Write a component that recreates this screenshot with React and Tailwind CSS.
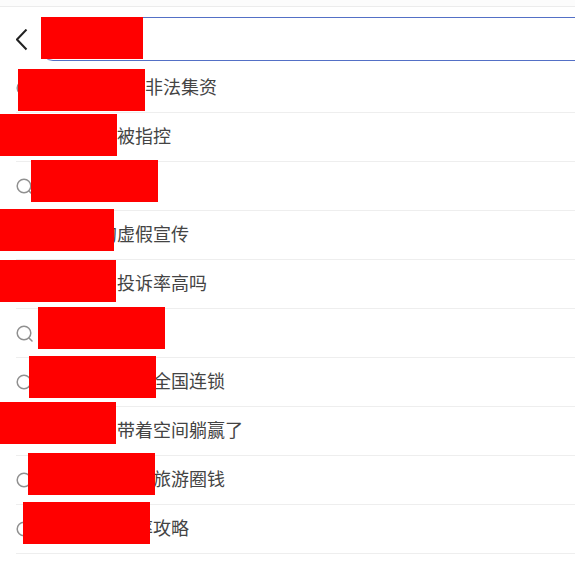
const rows = [
  { text: '非法集资', textClass: 'ml-[112px]', icon: true, mask: 'left-[18px] w-[127px] top-[5px]' },
  { text: '被指控', textClass: 'ml-[85px]', icon: false, mask: 'left-0 w-[117px] top-[1px]' },
  { text: '', textClass: '', icon: true, mask: 'left-[31px] w-[127px] top-[-2px]' },
  { text: '的虚假宣传', textClass: 'ml-[67px]', icon: false, mask: 'left-0 w-[114px] top-[-2px]' },
  { text: '投诉率高吗', textClass: 'ml-[85px]', icon: false, mask: 'left-0 w-[116px] top-0' },
  { text: '', textClass: '', icon: true, mask: 'left-[38px] w-[127px] top-[-2px]' },
  { text: '全国连锁', textClass: 'ml-[120px]', icon: true, mask: 'left-[29px] w-[127px] top-[-2px]' },
  { text: '带着空间躺赢了', textClass: 'ml-[85px]', icon: false, mask: 'left-0 w-[116px] top-[-5px]' },
  { text: '旅游圈钱', textClass: 'ml-[120px]', icon: true, mask: 'left-[28px] w-[127px] top-[-3px]' },
  { text: '率攻略', textClass: 'ml-[102px]', icon: true, mask: 'left-[23px] w-[127px] top-[-3px]' },
];

const SearchIcon = () => (
  <svg width="17" height="17" viewBox="0 0 17 17" fill="none" stroke="#909090" strokeWidth="1.5" className="shrink-0">
    <circle cx="8" cy="8" r="6.8" />
    <path d="M13 13l3 3" strokeLinecap="round" />
  </svg>
);

export default function App() {
  return (
    <div className="w-[575px] h-[583px] overflow-hidden bg-white" style={{ fontFamily: '"Noto Sans CJK SC", "Liberation Sans", sans-serif' }}>
      <div className="h-[7px] bg-[#fcfcfc] border-b border-[#ececec]"></div>
      <div className="flex items-start h-[57px] pt-[10px] pl-[16px]">
        <svg width="12" height="22" viewBox="0 0 12 22" fill="none" stroke="#222" strokeWidth="2" className="shrink-0 mt-[12px]">
          <path d="M10.5 .5L1 10.5l9.5 10" />
        </svg>
        <div className="relative ml-[13px] flex-1 -mr-2 h-[44px] border border-[#5470c6] rounded-l-[12px]">
          <div className="absolute left-[-1px] top-[-1px] w-[102px] h-[42px] bg-[#ff0000]"></div>
        </div>
      </div>
      <div>
        {rows.map((row, i) => (
          <div key={i} className="relative ml-[16px] h-[49px] flex items-center border-b border-[#eeeeee] text-[18px] text-[#444444]">
            {row.icon ? <SearchIcon /> : null}
            <span className={row.icon ? row.textClass + ' pb-[4px]' : row.textClass + ' pl-[16px] pb-[4px]'}>{row.text}</span>
            <div className={'absolute h-[42px] bg-[#ff0000] -ml-[16px] ' + row.mask}></div>
          </div>
        ))}
      </div>
    </div>
  );
}
